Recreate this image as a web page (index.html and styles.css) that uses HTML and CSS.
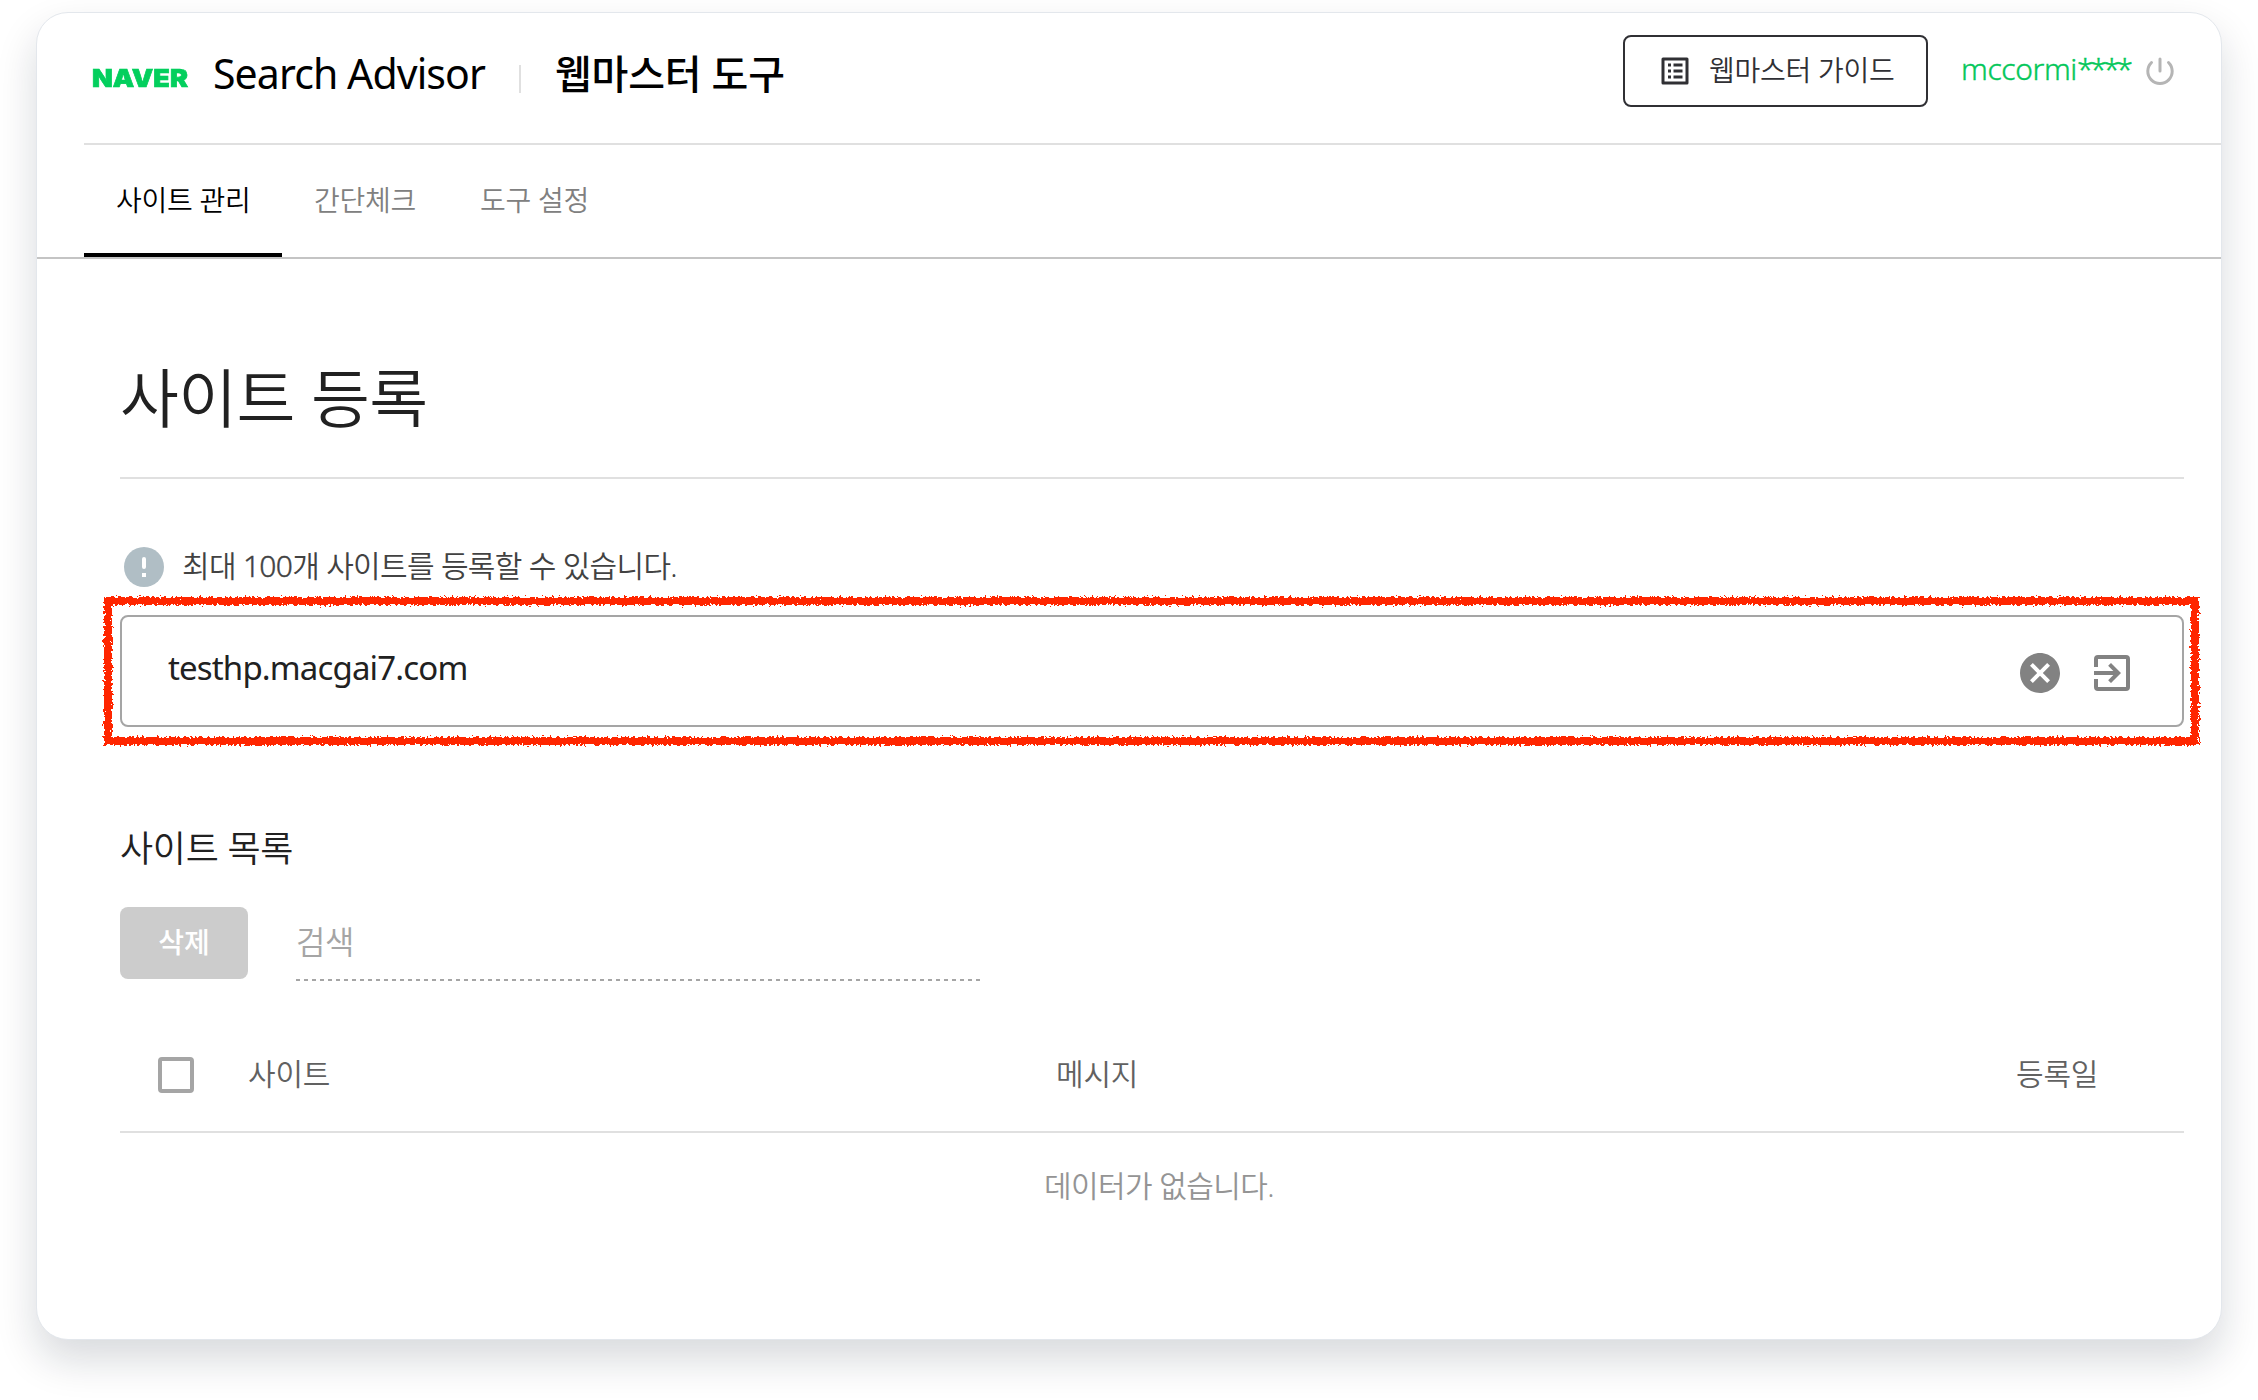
FILE: index.html
```html
<!DOCTYPE html>
<html lang="ko">
<head>
<meta charset="utf-8">
<title>네이버 서치어드바이저</title>
<link rel="stylesheet" href="styles.css">
</head>
<body>
<main class="window">
  <header class="header">
    <span class="logo">NAVER</span>
    <span class="product">Search Advisor</span>
    <span class="divider"></span>
    <span class="service">웹마스터 도구</span>
    <a class="guide">
      <svg class="guide-icon" viewBox="0 0 28 28"><path fill="none" stroke="#303034" stroke-width="3" stroke-linejoin="round" d="M2 2h24v24H2z"/><path fill="#303034" d="M7 6.500h3v3H7zM12.500 6.500h9v3h-9zM7 12.500h3v3H7zM12.500 12.500h9v3h-9zM7 18.500h3v3H7zM12.500 18.500h9v3h-9z"/></svg>
      <span class="guide-label">웹마스터 가이드</span>
    </a>
    <span class="user">mccormi<span class="mask">****</span></span>
    <svg class="power" viewBox="0 0 28 28"><path fill="none" stroke="#b5b5b5" stroke-width="3" stroke-linecap="round" d="M14 2v12M5.500 5.500a12.200 12.200 0 1 0 17 0"/></svg>
  </header>
  <nav class="tabs">
    <a class="tab active">사이트 관리</a>
    <a class="tab">간단체크</a>
    <a class="tab">도구 설정</a>
  </nav>
  <section class="content">
    <h1 class="title">사이트 등록</h1>
    <p class="notice">
      <svg class="notice-icon" viewBox="0 0 40 40"><circle cx="20" cy="20" r="20" fill="#b0bec5"/><path stroke="#fff" stroke-width="4" stroke-linecap="round" d="M20 12v8"/><path fill="#fff" d="M18 26h4v4h-4z"/></svg>
      <span class="notice-text">최대 <span class="count">100</span>개 사이트를 등록할 수 있습니다.</span>
    </p>
    <div class="field">
      <span class="url">testhp.macgai7.com</span>
      <svg class="clear" viewBox="2 2 20 20"><path fill="#828282" d="M12 2C6.470 2 2 6.470 2 12s4.470 10 10 10 10-4.470 10-10S17.530 2 12 2zm5 13.590L15.590 17 12 13.410 8.410 17 7 15.590 10.590 12 7 8.410 8.410 7 12 10.590 15.590 7 17 8.410 13.410 12 17 15.590z"/></svg>
      <svg class="submit" viewBox="3 3 18 18"><path fill="#828282" d="M19 3H5a2 2 0 0 0-2 2v4h2V5h14v14H5v-4H3v4a2 2 0 0 0 2 2h14a2 2 0 0 0 2-2V5a2 2 0 0 0-2-2zM10.080 15.580 11.500 17l5-5-5-5-1.420 1.410L12.670 11H3v2h9.670z"/></svg>
      <svg class="marker" viewBox="0 0 2100 156"><defs><filter id="rough" filterUnits="userSpaceOnUse" x="0" y="0" width="2100" height="156"><feTurbulence type="fractalNoise" baseFrequency="0.4" numOctaves="2" seed="4" result="n"/><feDisplacementMap in="SourceGraphic" in2="n" scale="7" xChannelSelector="R" yChannelSelector="G"/></filter></defs><rect x="6" y="7" width="2087" height="140" fill="none" stroke="#ff2600" stroke-width="8" filter="url(#rough)"/></svg>
    </div>
    <h2 class="subtitle">사이트 목록</h2>
    <div class="toolbar">
      <button class="delete">삭제</button>
      <div class="search">검색</div>
    </div>
    <div class="table-head">
      <span class="checkbox"></span>
      <span class="col-site">사이트</span>
      <span class="col-message">메시지</span>
      <span class="col-date">등록일</span>
    </div>
    <p class="empty">데이터가 없습니다.</p>
  </section>
</main>
</body>
</html>
```
FILE: styles.css
```css
* { box-sizing: border-box; }
body {
  margin: 0;
  height: 1400px;
  padding: 12px 36px 60px;
  overflow: hidden;
  background: #fff;
  color: #212121;
  font-family: "Noto Sans", "Noto Sans CJK KR", sans-serif;
  font-weight: 350;
  white-space: nowrap;
}
.window {
  height: 1328px;
  border: 1px solid #e3e7ec;
  border-radius: 32px;
  background: #fff;
  box-shadow: 0 20px 40px rgba(15, 23, 42, 0.16);
}
.header {
  display: flex;
  align-items: center;
  height: 132px;
  margin-left: 47px;
  padding: 0 47px 14px 8px;
  border-bottom: 2px solid #e0e0e0;
}
.header > * { flex: none; }
.logo {
  width: 98px;
  margin-top: 13px;
  color: #03cf5d;
  font: 900 25px/30px Inter, sans-serif;
  -webkit-text-stroke: 0.7px #03cf5d;
  transform: scaleX(1.08);
  transform-origin: left;
}
.product {
  width: 306px;
  margin: 3px 0 0 23px;
  color: #000;
  font-size: 41px;
  font-weight: 400;
  line-height: 60px;
  letter-spacing: -0.9px;
}
.divider { width: 2px; height: 28px; margin-top: 16px; background: #e0e0e0; }
.service {
  margin: 5px 0 0 34px;
  color: #000;
  font-size: 40px;
  font-weight: 500;
  line-height: 60px;
  letter-spacing: -0.2px;
}
.guide {
  display: flex;
  align-items: center;
  width: 305px;
  height: 72px;
  margin-left: auto;
  padding: 0 0 2px 36px;
  border: 2px solid #303034;
  border-radius: 8px;
  color: #303034;
  font-size: 28px;
  letter-spacing: -0.25px;
}
.guide-icon { width: 28px; height: 28px; margin-top: 2px; }
.guide-label { margin: -2px 0 0 20px; }
.user {
  width: 185px;
  margin: -6px 0 0 33px;
  color: #03c75a;
  font-size: 30px;
  letter-spacing: -0.4px;
  -webkit-text-stroke: 0.4px #03c75a;
}
.mask { letter-spacing: -3.3px; }
.power { width: 28px; height: 28px; }
.tabs {
  display: flex;
  height: 114px;
  padding-left: 47px;
  border-bottom: 2px solid #c4c4c4;
}
.tab {
  height: 112px;
  padding: 0 32px;
  color: #808080;
  font-size: 28px;
  line-height: 110px;
  letter-spacing: -0.25px;
}
.tab.active { width: 198px; border-bottom: 4px solid #000; color: #000; }
.content { padding: 0 37px 0 83px; }
.title {
  height: 220px;
  margin: 0;
  border-bottom: 2px solid #e0e0e0;
  font-size: 64px;
  font-weight: 350;
  line-height: 278px;
  letter-spacing: -0.6px;
}
.notice {
  display: flex;
  align-items: center;
  height: 40px;
  margin: 68px 0 28px;
  padding-left: 4px;
  color: #424242;
  font-size: 30px;
  letter-spacing: -0.7px;
}
.notice-icon { width: 40px; height: 40px; margin-right: 18px; }
.notice-text { margin-top: -7px; }
.count { -webkit-text-stroke: 0.4px #424242; }
.field {
  position: relative;
  display: flex;
  align-items: center;
  height: 112px;
  padding: 0 52px 0 46px;
  border: 2px solid #a5a5a5;
  border-radius: 8px;
}
.url {
  margin: -7px auto 0 0;
  font-size: 33px;
  font-weight: 400;
  letter-spacing: -0.85px;
}
.clear { width: 40px; height: 40px; margin-top: 4px; }
.submit { width: 36px; height: 36px; margin: 4px 0 0 34px; }
.marker { position: absolute; left: -20px; top: -23px; width: 2100px; height: 156px; }
.subtitle {
  height: 60px;
  margin: 92px 0 28px;
  font-size: 36px;
  font-weight: 350;
  line-height: 60px;
  letter-spacing: -0.3px;
}
.toolbar { display: flex; height: 74px; }
.delete {
  width: 128px;
  height: 72px;
  padding: 0 0 4px;
  border: 0;
  border-radius: 8px;
  background: #ccc;
  color: #fff;
  font: 500 28px "Noto Sans CJK KR", sans-serif;
}
.search {
  width: 685px;
  height: 74px;
  margin-left: 48px;
  background: repeating-linear-gradient(90deg, #a5a5a5 0 4px, transparent 4px 8px) left bottom / 100% 2px no-repeat;
  color: #a5a5a5;
  font-size: 32px;
  line-height: 69px;
  letter-spacing: -0.4px;
}
.table-head {
  display: flex;
  align-items: center;
  height: 116px;
  margin-top: 36px;
  padding: 0 36px 4px 38px;
  border-bottom: 2px solid #e0e0e0;
  color: #616161;
  font-size: 30px;
  letter-spacing: -0.2px;
}
.checkbox { width: 36px; height: 36px; margin-top: 6px; border: 4px solid #a5a5a5; border-radius: 4px; }
.col-site { width: 808px; margin-left: 54px; }
.col-message { width: 960px; }
.empty {
  margin: 23px 0 0 14px;
  color: #949494;
  font-size: 30px;
  line-height: 60px;
  letter-spacing: -0.6px;
  text-align: center;
}
```
